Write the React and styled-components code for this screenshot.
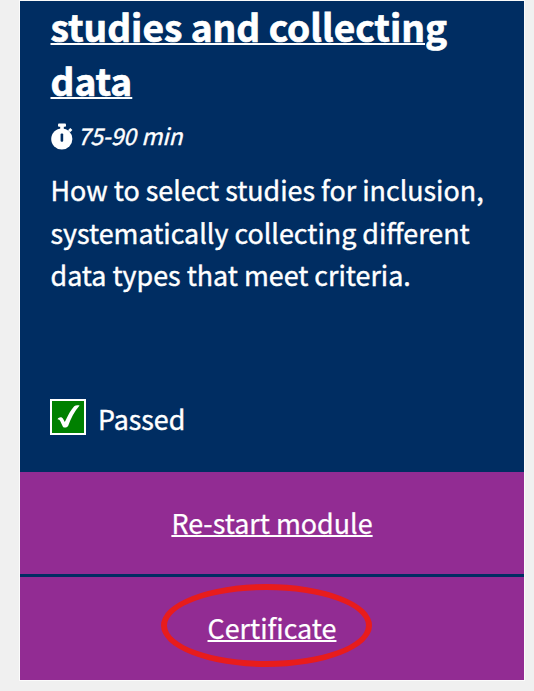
import React from 'react'
import styled, { createGlobalStyle } from 'styled-components';


const GlobalStyle = createGlobalStyle`
  * {
    box-sizing: border-box;
  }
  body {
    margin: 0;
    overflow: hidden;
    background-color: #f0f0f0;
    font-family: 'Noto Sans CJK JP', 'Noto Sans', sans-serif;
  }
`
const Page = styled.div`
  height: 691px;
  padding: 0 9px 0 19px;
`
const Card = styled.div`
  border: 1px solid #fbfbfb;
  color: white;
  display: flex;
  flex-direction: column;
`
const Content = styled.div`
  height: 471.4px;
  padding: 0 30px;
  background-color: #002d62;
  -webkit-text-stroke: 0.4px white;
`
const Title = styled.h2`
  margin: -1px 0 0;
  padding-left: 0.5px;
  font-size: 37.1px;
  line-height: 53.6px;
  font-weight: 700;
  text-decoration: underline;
  text-decoration-thickness: 1.5px;
  text-underline-offset: 1px;
  white-space: nowrap;
  -webkit-text-stroke: 0.7px white;
`
const Duration = styled.div`
  margin-top: 9px;
  height: 40px;
  padding-left: 0.5px;
  display: flex;
  align-items: center;
  gap: 5px;
  font-size: 22.8px;
  line-height: 40px;
  font-style: italic;
`
const Description = styled.p`
  margin: 13px 0 0;
  padding-left: 0.5px;
  font-size: 26.85px;
  line-height: 42.5px;
  white-space: nowrap;
`
const Status = styled.div`
  margin-top: 101.5px;
  display: flex;
  align-items: center;
  gap: 12px;
  font-size: 26.8px;
  line-height: 42px;
`
const CheckBox = styled.div`
  width: 36px;
  height: 36px;
  margin-top: -4px;
  border: 2px solid white;
  background-color: #008000;
`
const Action = styled.div`
  position: relative;
  height: ${props => props.height}px;
  padding-bottom: ${props => props.$lift || 0}px;
  border-bottom: ${props => props.$divided ? '3px solid #002d62' : 'none'};
  background-color: #922c93;
  display: flex;
  align-items: center;
  justify-content: center;
`
const ActionLink = styled.a`
  color: white;
  font-size: 26.9px;
  line-height: 42px;
  text-decoration: underline;
  text-decoration-thickness: 1.5px;
  text-underline-offset: 1px;
  -webkit-text-stroke: 0.25px white;
`
const Highlight = styled.div`
  position: absolute;
  left: 141px;
  top: 7px;
  width: 211px;
  height: 83px;
  border: 6px solid #e81c1c;
  border-radius: 50%;
`

const Stopwatch = () => (
  <svg width="22" height="27" viewBox="0 0 22 27" fill="white">
    <rect x="7" y="0.5" width="8" height="3.2" rx="1" />
    <rect x="9.2" y="2" width="3.6" height="5" />
    <path d="M17 7.2l2.3-2.3 2.1 2.1-2.3 2.3z" />
    <circle cx="10.8" cy="16" r="10.6" />
    <rect x="9.6" y="10.4" width="2.6" height="8.4" rx="1" fill="#002d62" />
  </svg>
)

const Check = () => (
  <svg width="32" height="32" viewBox="0 0 32 32" fill="white">
    <path d="M5.5 18.2C7 15.7 10 15.5 11.2 18l1.6 3C16 14.500 19 8.500 22.200 5.300c1.400-1.200 3.400-1.200 5.400-.8-5 5.800-8.900 12.900-11.500 20.600-.8 1.700-4.300 2.100-5.300.3L8.200 19.900c-.5-1-1.300-1.600-2.700-1.700z" />
  </svg>
)

const App = () => {
  return (
    <>
      <GlobalStyle />
      <Page>
        <Card>
          <Content>
            <Title>studies and collecting<br />data</Title>
            <Duration>
              <Stopwatch />
              <span>75-90 min</span>
            </Duration>
            <Description>
              How to select studies for inclusion,<br />
              systematically collecting different<br />
              data types that meet criteria.
            </Description>
            <Status>
              <CheckBox><Check /></CheckBox>
              <span>Passed</span>
            </Status>
          </Content>
          <Action height={104.6} $divided $lift={1}>
            <ActionLink>Re-start module</ActionLink>
          </Action>
          <Action height={102.6} $lift={1}>
            <ActionLink>Certificate</ActionLink>
            <Highlight />
          </Action>
        </Card>
      </Page>
    </>
  )
}

export default App;
